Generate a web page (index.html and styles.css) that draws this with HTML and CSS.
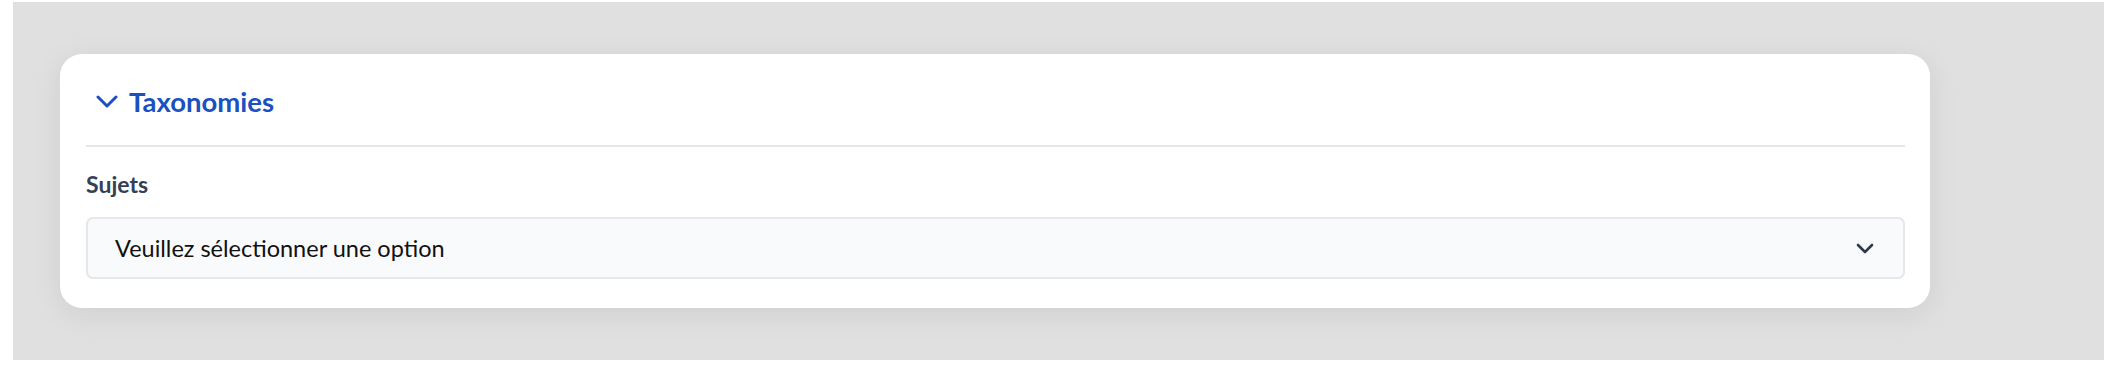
FILE: index.html
```html
<!DOCTYPE html>
<html lang="fr">
<head>
  <meta charset="UTF-8">
  <title>Taxonomies</title>
  <link rel="stylesheet" href="styles.css">
</head>
<body>
  <div class="frame">
    <div class="card">
      <div class="card-head">
        <svg class="chev-blue" viewBox="0 0 22 14" width="22" height="14">
          <path d="M2 2 L11 11 L20 2" fill="none" stroke="currentColor" stroke-width="3" stroke-linecap="round" stroke-linejoin="round"/>
        </svg>
        <span class="head-title">Taxonomies</span>
      </div>

      <div class="field">
        <div class="field-label">Sujets</div>
        <div class="select">
          <span class="select-text">Veuillez sélectionner une option</span>
          <svg class="chev-dark" viewBox="0 0 18 11" width="18" height="11">
            <path d="M2 2 L9 9 L16 2" fill="none" stroke="currentColor" stroke-width="2.6" stroke-linecap="round" stroke-linejoin="round"/>
          </svg>
        </div>
      </div>
    </div>
  </div>
</body>
</html>
```

FILE: styles.css
```css
body {
  margin: 0;
  background-color: #ffffff;
  font-family: Lato, "Noto Sans", sans-serif;
}

.frame {
  margin: 2px 1px 0 13px;
  height: 358px;
  background-color: #e0e0e0;
  padding: 52px 0 0 47px;
  box-sizing: border-box;
}

.card {
  width: 1870px;
  height: 254px;
  background-color: #ffffff;
  border-radius: 22px;
  box-shadow: 0 6px 30px rgba(0, 0, 0, 0.08);
  padding: 0 25px 0 26px;
  box-sizing: border-box;
}

.card-head {
  display: flex;
  align-items: center;
  height: 93px;
  padding: 4px 0 0 10px;
  gap: 11px;
  border-bottom: 2px solid #e6e7ea;
  box-sizing: border-box;
}

.chev-blue {
  color: #1a50c0;
}

.head-title {
  color: #1a50c0;
  font-size: 27.5px;
  font-weight: bold;
}

.field {
  padding-top: 21px;
}

.field-label {
  color: #334155;
  font-size: 23px;
  font-weight: bold;
  line-height: 32px;
}

.select {
  margin-top: 17px;
  height: 62px;
  display: flex;
  align-items: center;
  justify-content: space-between;
  background-color: #f9fafb;
  border: 2px solid #e5e7eb;
  border-radius: 7px;
  padding: 0 29px 0 27px;
  box-sizing: border-box;
}

.select-text {
  color: #111111;
  font-size: 23.5px;
}

.chev-dark {
  color: #2d3a4c;
}
```
